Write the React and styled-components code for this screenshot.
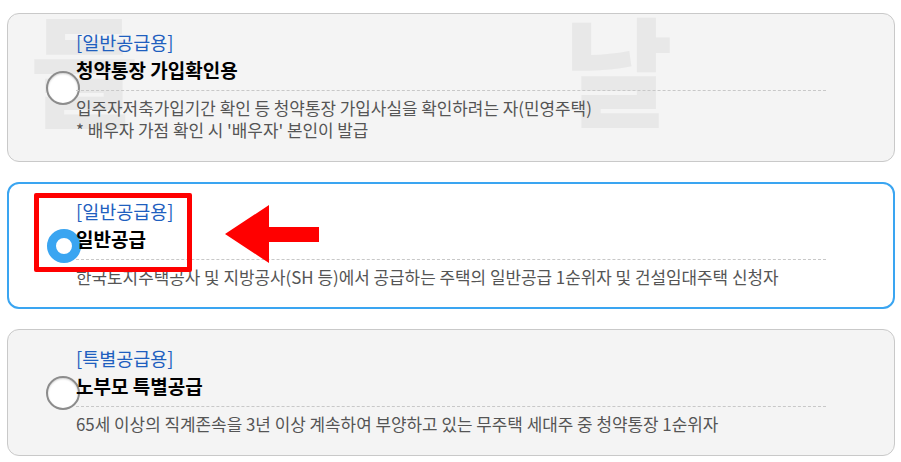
import React from "react";
import styled, { createGlobalStyle, css } from "styled-components";

const GlobalStyle = createGlobalStyle`
  html, body { margin: 0; padding: 0; background: #ffffff; }
  body { font-family: "Noto Sans CJK KR", "Noto Sans", sans-serif; }
`;

const List = styled.div`
  display: flex;
  flex-direction: column;
  gap: 20px;
  padding: 13px 6px 0 7px;
`;

const Card = styled.div`
  position: relative;
  border-radius: 12px;
  padding: 16px 68px 20px 68px;
  background: ${(p) => (p.$selected ? "#ffffff" : "#f4f4f4")};
  border: ${(p) => (p.$selected ? "2px solid #3aa5f1" : "1px solid #c9c9c9")};
  ${(p) =>
    p.$selected &&
    css`
      padding: 15px 67px 19px 67px;
    `}
`;

const WatermarkLayer = styled.div`
  position: absolute;
  inset: 0;
  overflow: hidden;
  border-radius: 12px;
  pointer-events: none;
`;

const WatermarkGlyph = styled.span`
  position: absolute;
  left: ${(p) => p.$x}px;
  top: ${(p) => p.$y}px;
  font-family: "Noto Sans CJK KR", sans-serif;
  font-weight: 900;
  font-size: 118px;
  line-height: 1;
  color: #e8e8e8;
`;

const Content = styled.div`
  position: relative;
  z-index: 1;
  display: flex;
  flex-direction: column;
`;

const Radio = styled.span`
  position: absolute;
  left: 38px;
  top: 50%;
  transform: translateY(-50%);
  width: 34px;
  height: 34px;
  box-sizing: border-box;
  border-radius: 50%;
  z-index: 0;
  ${(p) =>
    p.$checked
      ? css`
          border: 9px solid #3aa5f1;
          background: #ffffff;
        `
      : css`
          border: 2px solid #8c8c8c;
          background: #ffffff;
          box-shadow: inset 0 1px 2px rgba(0, 0, 0, 0.18);
        `}
`;

const Label = styled.div`
  font-size: 18.5px;
  line-height: 24px;
  color: #1f5fbf;
`;

const Title = styled.div`
  margin-top: 3px;
  font-size: 19px;
  line-height: 26px;
  font-weight: 700;
  color: #000000;
`;

const Divider = styled.div`
  margin-top: 7px;
  border-top: 1px dashed #c8c8c8;
`;

const Desc = styled.div`
  margin-top: 6px;
  font-size: 16.9px;
  line-height: 22px;
  color: #555555;
`;

const HighlightBox = styled.div`
  position: absolute;
  left: 25px;
  top: 9px;
  width: 158px;
  height: 79px;
  box-sizing: border-box;
  border: 5px solid #ff0000;
  border-radius: 2px;
  z-index: 2;
  pointer-events: none;
`;

const ArrowSvg = styled.svg`
  position: absolute;
  left: 214px;
  top: 19px;
  z-index: 2;
`;

function Arrow() {
  return (
    <ArrowSvg width="96" height="60" viewBox="0 0 96 60">
      <polygon
        fill="#ff0000"
        points="2,31 46,2 46,24 96,24 96,39 46,39 46,60"
      />
    </ArrowSvg>
  );
}

const items = [
  {
    label: "[일반공급용]",
    title: "청약통장 가입확인용",
    desc: [
      "입주자저축가입기간 확인 등 청약통장 가입사실을 확인하려는 자(민영주택)",
      "* 배우자 가점 확인 시 '배우자' 본인이 발급",
    ],
    watermark: true,
  },
  {
    label: "[일반공급용]",
    title: "일반공급",
    desc: [
      "한국토지주택공사 및 지방공사(SH 등)에서 공급하는 주택의 일반공급 1순위자 및 건설임대주택 신청자",
    ],
    selected: true,
  },
  {
    label: "[특별공급용]",
    title: "노부모 특별공급",
    desc: [
      "65세 이상의 직계존속을 3년 이상 계속하여 부양하고 있는 무주택 세대주 중 청약통장 1순위자",
    ],
  },
];

export default function App() {
  return (
    <>
      <GlobalStyle />
      <List>
        {items.map((it, i) => (
          <Card key={i} $selected={it.selected}>
            {it.watermark && (
              <WatermarkLayer>
                <WatermarkGlyph $x={22} $y={-6}>들</WatermarkGlyph>
                <WatermarkGlyph $x={556} $y={-6}>날</WatermarkGlyph>
              </WatermarkLayer>
            )}
            <Radio $checked={it.selected} />
            <Content>
              <Label>{it.label}</Label>
              <Title>{it.title}</Title>
              <Divider />
              <Desc>
                {it.desc.map((d, j) => (
                  <div key={j}>{d}</div>
                ))}
              </Desc>
            </Content>
            {it.selected && (
              <>
                <HighlightBox />
                <Arrow />
              </>
            )}
          </Card>
        ))}
      </List>
    </>
  );
}
